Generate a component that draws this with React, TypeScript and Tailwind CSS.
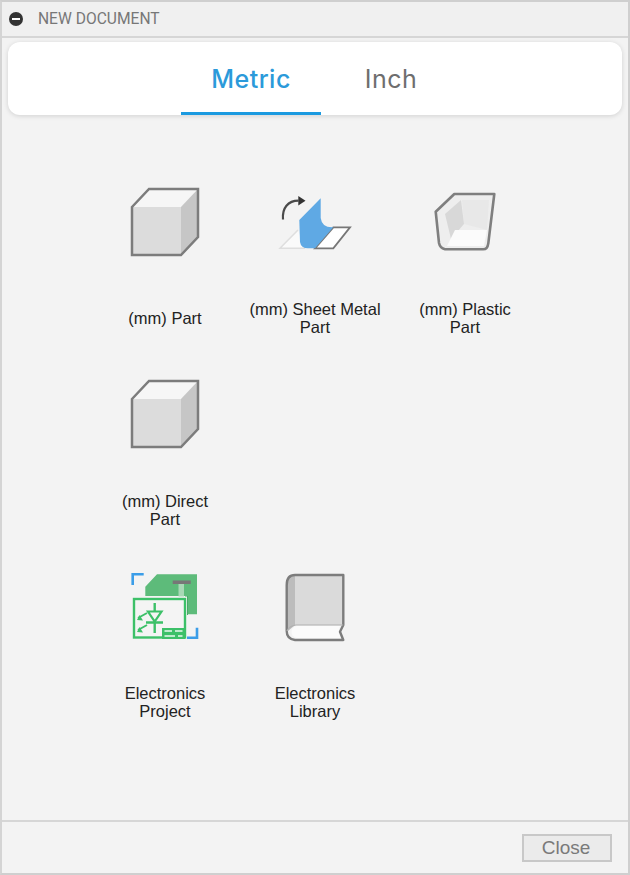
const CubeIcon = () => (
  <svg width="80" height="80" viewBox="0 0 80 80">
    <path d="M7 25 L24 7 H73 L56 25 Z" fill="#f6f6f6" />
    <path d="M7 25 H56 V73 H7 Z" fill="#dcdcdc" />
    <path d="M56 25 L73 7 V55 L56 73 Z" fill="#c6c6c6" />
    <path d="M7 25 L24 7 H73 V55 L56 73 H7 Z" fill="none" stroke="#7c7c7c" strokeWidth="2.5" />
  </svg>
);

const SheetMetalIcon = () => (
  <svg width="80" height="80" viewBox="0 0 80 80">
    <path d="M23 48 L5 66.3 H30" fill="#fafafa" stroke="#dedede" strokeWidth="1.5" />
    <path d="M58.3 45.3 H75 L58.3 66.3 H40 Z" fill="#ffffff" stroke="#777777" strokeWidth="1.8" />
    <path d="M45.7 16.3 L24.3 38 L25 60 Q26 66.3 33 66.3 H40 L58.3 45.3 Q47 46 45.7 36 Z" fill="#5fa9e4" />
    <path d="M8 37.5 C7 26 13 18.7 23.5 18.7" fill="none" stroke="#4a4a4a" strokeWidth="2.2" />
    <path d="M23.3 14 L30.5 18.7 L23.3 23.5 Z" fill="#333333" />
  </svg>
);

const PlasticIcon = () => (
  <svg width="80" height="80" viewBox="0 0 80 80">
    <path d="M10.7 29.7 L29.3 12 H69.3 L63.3 61.3 Q62.5 67.3 58.3 67.3 H20 Q15 66 14 61 Z" fill="#eeeeee" />
    <path d="M37 18 H64 L62 48 L39 42 Z" fill="#e8e8e8" />
    <path d="M20 32 L36 18 L39 42 L26 57 Z" fill="#d8d8d8" />
    <path d="M30 48 H62 L59 64 H22 Z" fill="#fbfbfb" />
    <path d="M10.7 29.7 L29.3 12 H69.3 L63.3 61.3 Q62.5 67.3 58.3 67.3 H20 Q15 66 14 61 Z" fill="none" stroke="#7f7f7f" strokeWidth="2.6" strokeLinejoin="round" />
  </svg>
);

const ElectronicsIcon = () => (
  <svg width="80" height="80" viewBox="0 0 80 80">
    <path d="M7.7 19 V8.3 H18.7" fill="none" stroke="#3b9de8" strokeWidth="2.6" />
    <path d="M61 71.7 H72 V61.7" fill="none" stroke="#3b9de8" strokeWidth="2.6" />
    <path d="M20.3 20.7 L32 8.3 H72 V48.3 H60 V30 H20.3 Z" fill="#5dbb7a" />
    <rect x="47.7" y="14.5" width="18" height="3.5" fill="#777777" />
    <rect x="53.5" y="18" width="5.5" height="13" fill="#a8d8b6" />
    <rect x="60" y="30" width="3" height="19" fill="#4aa869" />
    <rect x="7" y="30.5" width="55" height="43" fill="#f4f4f4" />
    <rect x="9" y="33" width="51" height="38.5" fill="none" stroke="#3cc068" strokeWidth="2.4" />
    <path d="M29.7 37 V67 M21 56.5 H38" stroke="#3cc068" strokeWidth="2.4" fill="none" />
    <path d="M23 45.5 H36.5 L29.7 55.5 Z" fill="#f4f4f4" stroke="#3cc068" strokeWidth="2.2" />
    <path d="M13 52 L22 47 M13 64 L22 59" stroke="#3cc068" strokeWidth="2" fill="none" />
    <path d="M12 54 L18 54.5 L14.5 49 Z M12 66 L18 66.5 L14.5 61 Z" fill="#3cc068" />
    <rect x="37" y="62" width="23" height="11" fill="#3cc068" />
    <path d="M39.5 65 H47 M50 65 H57.5 M39.5 70 H50 M53 70 H57.5" stroke="#e9f7ee" strokeWidth="1.4" />
  </svg>
);

const BookIcon = () => (
  <svg width="80" height="80" viewBox="0 0 80 80">
    <path d="M11.7 19 Q11.7 9 20 9 H68.3 V59 H20 L11.7 66 Z" fill="#dadada" />
    <path d="M11.7 19 Q11.7 9 20 9 V59 L11.7 66 Z" fill="#bcbcbc" />
    <path d="M22 60 H65 Q63 66 66 72 H22 Q16.5 71 16.5 66 Q16.5 61 22 60 Z" fill="#fbfbfb" />
    <path d="M11.7 19 Q11.7 9 20 9 H68.3 V59 L65 65.7 L68.3 74 H20 Q11.7 73 11.7 65 Z" fill="none" stroke="#7c7c7c" strokeWidth="2.4" strokeLinejoin="round" />
    <path d="M68.3 59 H21 Q14 60 12 65" fill="none" stroke="#b0b0b0" strokeWidth="1.2" />
  </svg>
);

const items = [
  { icon: <CubeIcon />, lines: ["(mm) Part"] },
  { icon: <SheetMetalIcon />, lines: ["(mm) Sheet Metal", "Part"] },
  { icon: <PlasticIcon />, lines: ["(mm) Plastic", "Part"] },
  { icon: <CubeIcon />, lines: ["(mm) Direct", "Part"] },
  null,
  null,
  { icon: <ElectronicsIcon />, lines: ["Electronics", "Project"] },
  { icon: <BookIcon />, lines: ["Electronics", "Library"] },
];

export default function App() {
  return (
    <div className="flex h-[875px] w-[630px] flex-col overflow-hidden border-2 border-[#cfcfcf] border-l-[#d4d4d4] bg-[#f3f3f3] font-['Liberation_Sans',sans-serif]">
      {/* title bar */}
      <div className="flex h-[36px] shrink-0 items-center border-b-2 border-[#d6d6d6] bg-[#f0f0f0] pl-[7px]">
        <div className="flex h-[14px] w-[14px] items-center justify-center rounded-full bg-[#333333]">
          <div className="h-[2px] w-[8px] bg-white" />
        </div>
        <span className="ml-[15px] pt-[2px] font-['Roboto',sans-serif] text-[15.6px] text-[#777777]">NEW DOCUMENT</span>
      </div>

      {/* tabs */}
      <div className="mx-[6px] mt-[4px] flex h-[73px] shrink-0 justify-center rounded-[12px] bg-white pl-[12px] shadow-[0_1px_5px_rgba(0,0,0,0.14)]">
        <div className="flex h-full w-[140px] items-center justify-center border-b-[3px] border-[#1b9ae0] pt-[5px] font-['Inter',sans-serif] text-[25px] font-medium tracking-[0.5px] text-[#2b9ada]">
          Metric
        </div>
        <div className="flex h-full w-[140px] items-center justify-center border-b-[3px] border-transparent pt-[5px] font-['Inter',sans-serif] text-[25px] font-normal tracking-[0.5px] text-[#6e6e6e]">
          Inch
        </div>
      </div>

      {/* document types */}
      <div className="min-h-0 flex-1 pl-[88px] pt-[67px]">
        <div className="grid w-[450px] grid-cols-3 auto-rows-[192px]">
          {items.map((item, i) =>
            item ? (
              <div key={i} className="flex flex-col items-center">
                {item.icon}
                <div className="mt-[38px] flex h-[36px] w-[150px] flex-col items-center justify-center text-center text-[16.5px] leading-[18px] text-[#222222]">
                  {item.lines.map((line) => (
                    <span key={line}>{line}</span>
                  ))}
                </div>
              </div>
            ) : (
              <div key={i} />
            ),
          )}
        </div>
      </div>

      {/* footer */}
      <div className="flex h-[53px] shrink-0 items-start justify-end border-t-2 border-[#d6d6d6] pr-[16px] pt-[12px]">
        <button className="flex h-[28px] w-[90px] items-center justify-center border-2 border-[#c8c8c8] bg-[#ebebeb] pr-[2px] text-[19px] text-[#7a7a7a]">
          Close
        </button>
      </div>
    </div>
  );
}
